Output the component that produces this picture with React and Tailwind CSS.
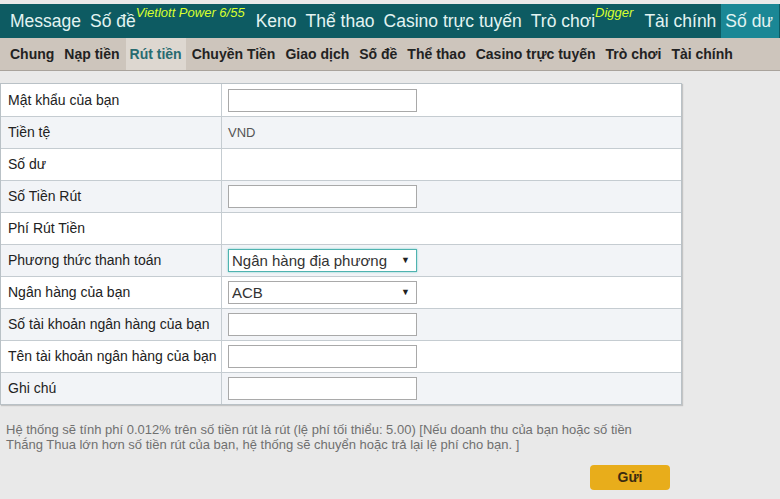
import { useState } from 'react';

const topNav = [
    { label: 'Message' },
    { label: 'Số đề', sup: 'Vietlott Power 6/55' },
    { label: 'Keno' },
    { label: 'Thể thao' },
    { label: 'Casino trực tuyến' },
    { label: 'Trò chơi', sup: 'Digger' },
    { label: 'Tài chính' },
    { label: 'Số dư', active: true },
];

const subNav = ['Chung', 'Nạp tiền', 'Rút tiền', 'Chuyền Tiền', 'Giao dịch', 'Số đề', 'Thể thao', 'Casino trực tuyến', 'Trò chơi', 'Tài chính'];

const App = () => {
    const [method, setMethod] = useState('local');
    const [bank, setBank] = useState('ACB');

    const rows = [
        { label: 'Mật khẩu của bạn', field: 'input' },
        { label: 'Tiền tệ', field: 'text', value: 'VND' },
        { label: 'Số dư', field: 'blank' },
        { label: 'Số Tiền Rút', field: 'input' },
        { label: 'Phí Rút Tiền', field: 'blank' },
        { label: 'Phương thức thanh toán', field: 'method' },
        { label: 'Ngân hàng của bạn', field: 'bank' },
        { label: 'Số tài khoản ngân hàng của bạn', field: 'input' },
        { label: 'Tên tài khoản ngân hàng của bạn', field: 'input' },
        { label: 'Ghi chú', field: 'input' },
    ];

    const renderField = (row) => {
        if (row.field === 'input') {
            return <input type="text" className="w-[189px] h-[23px] bg-white border border-[#a9a9a9] outline-none px-1 text-[13px]" />;
        }
        if (row.field === 'text') {
            return <span className="text-[13px] text-[#555]">{row.value}</span>;
        }
        if (row.field === 'method') {
            return (
                <div className="relative w-[189px] h-[23px] border border-[#4fb3b0] shadow-[0_0_2px_#7fd0cc] bg-white flex items-center">
                    <select
                        value={method}
                        onChange={(e) => setMethod(e.target.value)}
                        className="appearance-none w-full h-full pl-[3px] text-[15px] text-[#333] bg-transparent outline-none"
                    >
                        <option value="local">Ngân hàng địa phương</option>
                    </select>
                    <span className="absolute right-[6px] text-[9px] text-[#222] pointer-events-none">▼</span>
                </div>
            );
        }
        if (row.field === 'bank') {
            return (
                <div className="relative w-[189px] h-[23px] border border-[#a9a9a9] bg-white flex items-center">
                    <select
                        value={bank}
                        onChange={(e) => setBank(e.target.value)}
                        className="appearance-none w-full h-full pl-[3px] text-[15px] text-[#333] bg-transparent outline-none"
                    >
                        <option value="ACB">ACB</option>
                    </select>
                    <span className="absolute right-[6px] text-[9px] text-[#222] pointer-events-none">▼</span>
                </div>
            );
        }
        return null;
    };

    return (
        <div className="min-h-[499px] bg-[#e9e9e9] pt-[4px] font-['Liberation_Sans',Arial,sans-serif]">
            {/* top nav */}
            <div className="h-[34px] bg-[#0d5b62] flex items-stretch pl-[6px] gap-[1px] overflow-hidden">
                {topNav.map((item) => (
                    <div
                        key={item.label}
                        className={`flex items-center px-[4px] text-[17.5px] text-[#e3f4f2] whitespace-nowrap ${item.active ? 'bg-[#1a8795] pr-[6px]' : ''}`}
                    >
                        <span>{item.label}</span>
                        {item.sup && (
                            <span className="self-start mt-[2px] mr-[2px] text-[13px] italic text-[#d8ff2e] leading-none">{item.sup}</span>
                        )}
                    </div>
                ))}
            </div>

            {/* sub nav */}
            <div className="h-[33px] bg-[#cdc5bc] border-b border-[#a9a39c] flex items-stretch pl-[6px] gap-[2px]">
                {subNav.map((item) => (
                    <div
                        key={item}
                        className={`flex items-center px-[4px] text-[14px] font-bold whitespace-nowrap ${item === 'Rút tiền' ? 'bg-[#ddd7d0] text-[#286b70]' : 'text-[#222]'}`}
                    >
                        {item}
                    </div>
                ))}
            </div>

            {/* form table */}
            <div className="mt-[12px] w-[682px] border border-[#b9c1c6] shadow-[1px_1px_1px_#c4c4c4]">
                {rows.map((row, i) => (
                    <div
                        key={row.label}
                        className={`flex h-[32px] ${i > 0 ? 'border-t border-[#c5ccd1]' : ''} ${i % 2 === 0 ? 'bg-white' : 'bg-[#f2f4f7]'}`}
                    >
                        <div className="w-[221px] shrink-0 border-r border-[#c5ccd1] flex items-center pl-[7px] text-[14px] text-[#222] whitespace-nowrap">
                            {row.label}
                        </div>
                        <div className="flex-1 flex items-center pl-[6px]">{renderField(row)}</div>
                    </div>
                ))}
            </div>

            {/* note */}
            <p className="mt-[17px] pl-[6px] w-[650px] text-[13px] leading-[15px] text-[#707070]">
                Hệ thống sẽ tính phí 0.012% trên số tiền rút là rút (lệ phí tối thiểu: 5.00) [Nếu doanh thu của bạn hoặc số tiền Thắng Thua lớn hơn số tiền rút của bạn, hệ thống sẽ chuyển hoặc trả lại lệ phí cho bạn. ]
            </p>

            <div className="flex justify-end pr-[110px] mt-[13px]">
                <button className="w-[80px] h-[25px] rounded-[4px] bg-[#e8ad1b] text-[14px] font-bold text-[#3a2a10]">
                    Gửi
                </button>
            </div>
        </div>
    );
};

export default App;
